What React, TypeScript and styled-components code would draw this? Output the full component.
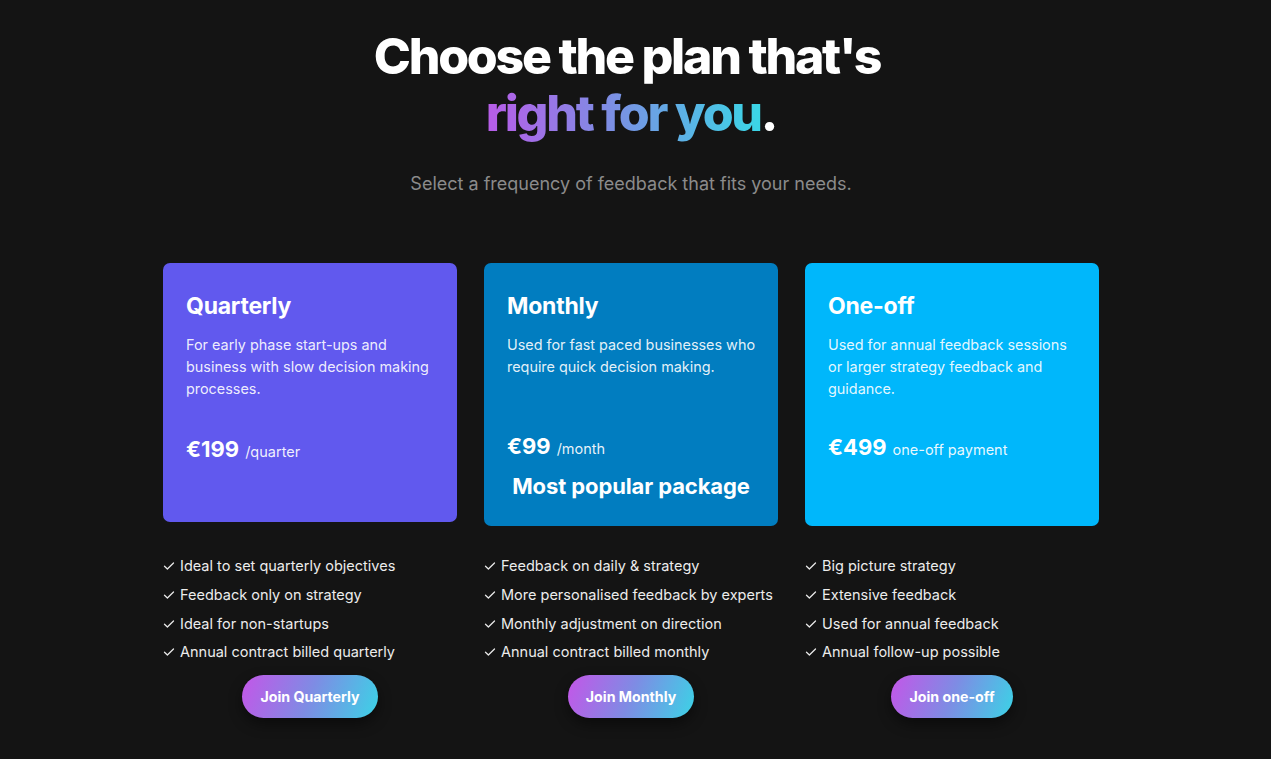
import React from "react"
import styled, { createGlobalStyle } from "styled-components"

const GlobalStyle = createGlobalStyle`
    html, body {
        margin: 0;
        padding: 0;
        background: #141414;
    }
    body {
        font-family: Inter, "Noto Sans", sans-serif;
        color: #fff;
        -webkit-font-smoothing: antialiased;
    }
`

const Page = styled.main`
    box-sizing: border-box;
    width: 1262px;
    min-height: 759px;
    display: flex;
    flex-direction: column;
    align-items: center;
    padding-top: 28px;
`

const Heading = styled.h1`
    margin: 0;
    font-size: 50px;
    line-height: 57px;
    font-weight: 800;
    letter-spacing: -0.045em;
    text-align: center;
`

const FirstLine = styled.span`
    display: inline-block;
    padding-right: 8px;
`

const Gradient = styled.span`
    background: linear-gradient(90deg, #b85ce8 0%, #7d8ee4 45%, #3ad6e6 100%);
    -webkit-background-clip: text;
    background-clip: text;
    color: transparent;
`

const Subtitle = styled.p`
    margin: 30px 0 0;
    font-size: 18px;
    line-height: 24px;
    color: #8b8b8b;
`

const Plans = styled.section`
    margin-top: 67px;
    display: grid;
    grid-template-columns: repeat(3, 294px);
    column-gap: 27px;
    align-items: start;
`

const Column = styled.div`
    display: grid;
    grid-template-rows: 263px auto auto;
`

interface CardProps {
    $bg: string
    $height: number
}

const Card = styled.div<CardProps>`
    box-sizing: border-box;
    height: ${(p) => p.$height}px;
    background: ${(p) => p.$bg};
    border-radius: 7px;
    padding: 28px 16px 0 23px;
    display: flex;
    flex-direction: column;
`

const CardTitle = styled.h2`
    margin: 0;
    font-size: 23px;
    line-height: 30px;
    font-weight: 700;
    letter-spacing: -0.01em;
`

const Description = styled.p`
    margin: 13px 0 0;
    min-height: 66px;
    font-size: 14.4px;
    line-height: 22px;
    color: rgba(255, 255, 255, 0.9);
`

const Price = styled.div<{ $offset: number }>`
    margin-top: ${(p) => p.$offset}px;
    display: flex;
    align-items: baseline;
    gap: 6px;
`

const Amount = styled.span`
    font-size: 22px;
    font-weight: 700;
`

const Period = styled.span`
    font-size: 14.5px;
    color: rgba(255, 255, 255, 0.92);
`

const Popular = styled.div`
    margin: 14px 0 0 -7px;
    text-align: center;
    font-size: 22px;
    font-weight: 700;
    letter-spacing: -0.005em;
`

const Features = styled.ul`
    list-style: none;
    margin: 30px 0 0;
    padding: 0;
    display: flex;
    flex-direction: column;
    gap: 8.8px;
`

const Feature = styled.li`
    display: flex;
    align-items: center;
    gap: 5px;
    font-size: 14.5px;
    line-height: 20px;
    color: #ececec;
`

const Check = styled.svg`
    flex: none;
    width: 12px;
    height: 12px;
`

const ButtonRow = styled.div`
    display: flex;
    justify-content: center;
    margin-top: 13px;
`

const JoinButton = styled.button`
    height: 43px;
    padding: 0 18px;
    border: none;
    border-radius: 22px;
    background: linear-gradient(110deg, #c456e8 0%, #7e8ce4 50%, #3bd3e6 100%);
    box-shadow: 0 6px 14px rgba(0, 0, 0, 0.45);
    color: #fff;
    font-family: Inter, "Noto Sans", sans-serif;
    font-size: 14.2px;
    font-weight: 700;
    cursor: pointer;
`

interface Plan {
    name: string
    description: string
    amount: string
    period: string
    color: string
    height: number
    priceOffset: number
    popular?: boolean
    features: string[]
    cta: string
}

const plans: Plan[] = [
    {
        name: "Quarterly",
        description: "For early phase start-ups and business with slow decision making processes.",
        amount: "€199",
        period: "/quarter",
        color: "#6159ee",
        height: 259,
        priceOffset: 36,
        features: [
            "Ideal to set quarterly objectives",
            "Feedback only on strategy",
            "Ideal for non-startups",
            "Annual contract billed quarterly",
        ],
        cta: "Join Quarterly",
    },
    {
        name: "Monthly",
        description: "Used for fast paced businesses who require quick decision making.",
        amount: "€99",
        period: "/month",
        color: "#017dc0",
        height: 263,
        priceOffset: 33,
        popular: true,
        features: [
            "Feedback on daily & strategy",
            "More personalised feedback by experts",
            "Monthly adjustment on direction",
            "Annual contract billed monthly",
        ],
        cta: "Join Monthly",
    },
    {
        name: "One-off",
        description: "Used for annual feedback sessions or larger strategy feedback and guidance.",
        amount: "€499",
        period: "one-off payment",
        color: "#00b7fb",
        height: 263,
        priceOffset: 34,
        features: [
            "Big picture strategy",
            "Extensive feedback",
            "Used for annual feedback",
            "Annual follow-up possible",
        ],
        cta: "Join one-off",
    },
]

const CheckIcon = () => (
    <Check viewBox="0 0 12 12" fill="none">
        <path d="M1.5 6.3 L4.4 9 L10.5 3" stroke="#e8e8e8" strokeWidth="1.3" strokeLinecap="round" strokeLinejoin="round" />
    </Check>
)

const App = () => {
    return (
        <>
            <GlobalStyle />
            <Page>
                <Heading>
                    <FirstLine>Choose the plan that's</FirstLine>
                    <br />
                    <Gradient>right for you</Gradient>.
                </Heading>
                <Subtitle>Select a frequency of feedback that fits your needs.</Subtitle>
                <Plans>
                    {plans.map((plan) => (
                        <Column key={plan.name}>
                            <div>
                                <Card $bg={plan.color} $height={plan.height}>
                                    <CardTitle>{plan.name}</CardTitle>
                                    <Description>{plan.description}</Description>
                                    <Price $offset={plan.priceOffset}>
                                        <Amount>{plan.amount}</Amount>
                                        <Period>{plan.period}</Period>
                                    </Price>
                                    {plan.popular && <Popular>Most popular package</Popular>}
                                </Card>
                            </div>
                            <Features>
                                {plan.features.map((f) => (
                                    <Feature key={f}>
                                        <CheckIcon />
                                        {f}
                                    </Feature>
                                ))}
                            </Features>
                            <ButtonRow>
                                <JoinButton>{plan.cta}</JoinButton>
                            </ButtonRow>
                        </Column>
                    ))}
                </Plans>
            </Page>
        </>
    )
}

export default App
